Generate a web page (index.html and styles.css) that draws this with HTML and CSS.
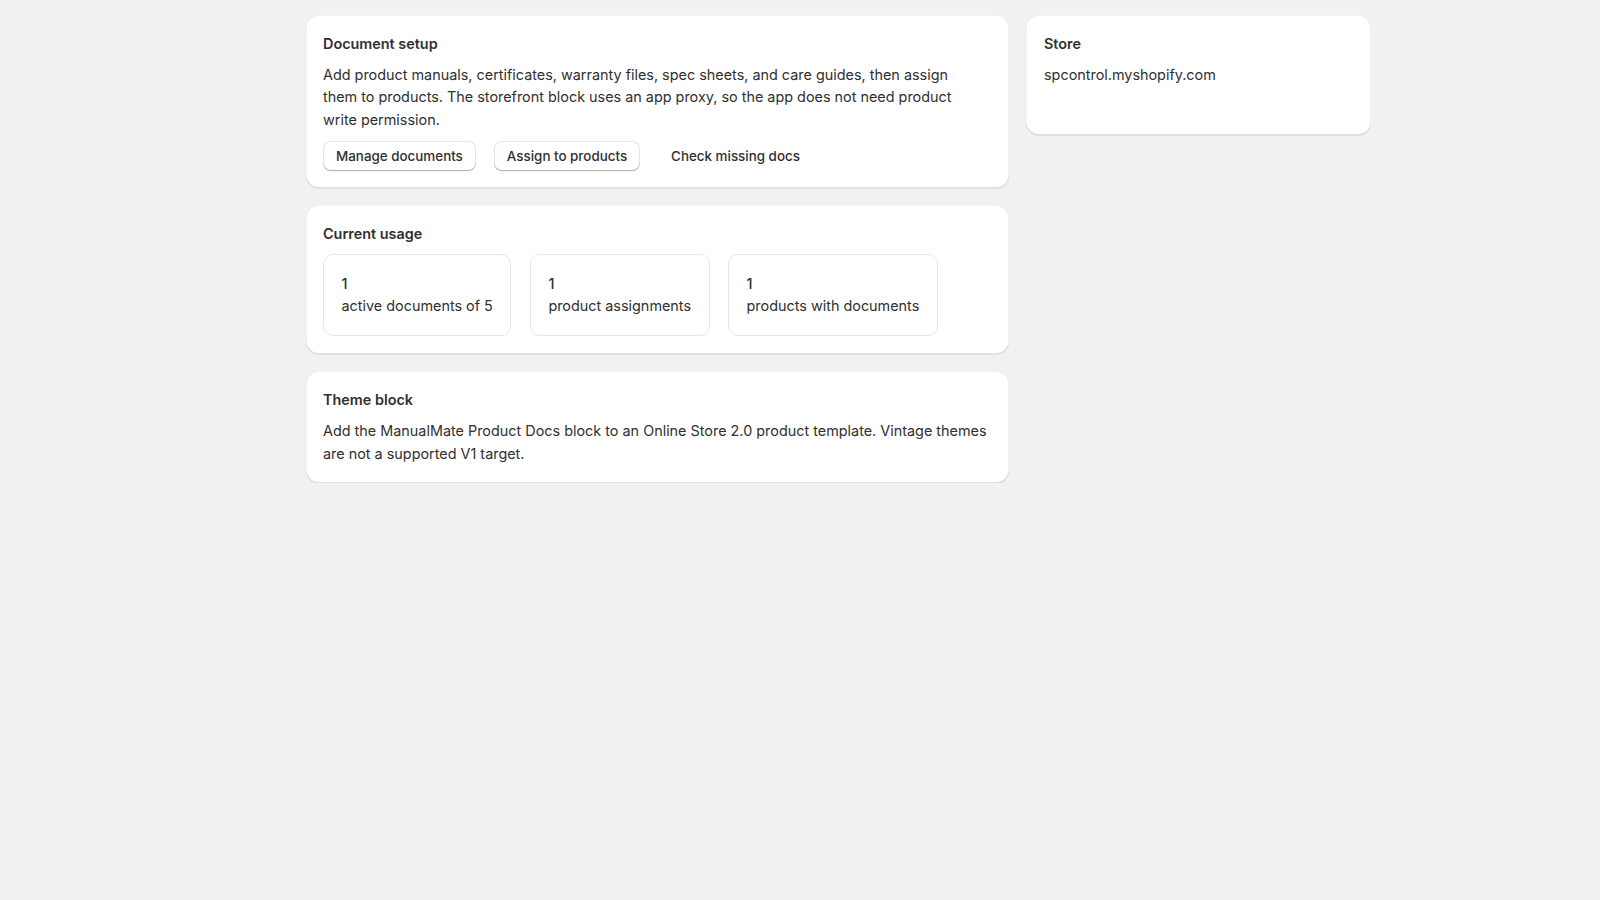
FILE: index.html
```html
<!DOCTYPE html>
<html lang="en">
<head>
<meta charset="utf-8">
<title>ManualMate</title>
<link rel="stylesheet" href="styles.css">
</head>
<body>
<div class="page">
  <div class="main">
    <section class="card">
      <h2 class="card-title">Document setup</h2>
      <p class="card-text">Add product manuals, certificates, warranty files, spec sheets, and care guides, then assign<br>them to products. The storefront block uses an app proxy, so the app does not need product<br>write permission.</p>
      <div class="actions">
        <button class="btn">Manage documents</button>
        <button class="btn">Assign to products</button>
        <button class="btn btn-plain">Check missing docs</button>
      </div>
    </section>

    <section class="card">
      <h2 class="card-title">Current usage</h2>
      <div class="stats">
        <div class="stat">
          <div class="stat-value">1</div>
          <div class="stat-label">active documents of 5</div>
        </div>
        <div class="stat">
          <div class="stat-value">1</div>
          <div class="stat-label">product assignments</div>
        </div>
        <div class="stat">
          <div class="stat-value">1</div>
          <div class="stat-label">products with documents</div>
        </div>
      </div>
    </section>

    <section class="card">
      <h2 class="card-title">Theme block</h2>
      <p class="card-text">Add the ManualMate Product Docs block to an Online Store 2.0 product template. Vintage themes are not a supported V1 target.</p>
    </section>
  </div>

  <aside class="side">
    <section class="card card-store">
      <h2 class="card-title">Store</h2>
      <p class="card-text">spcontrol.myshopify.com</p>
    </section>
  </aside>
</div>
</body>
</html>
```

FILE: styles.css
```css
* {
  box-sizing: border-box;
}

html,
body {
  margin: 0;
  background: #f1f1f1;
}

body {
  font-family: Inter, "Noto Sans", "Liberation Sans", sans-serif;
  font-size: 14.4px;
  color: #303030;
  -webkit-font-smoothing: antialiased;
}

.page {
  display: flex;
  align-items: flex-start;
  gap: 17px;
  padding: 15px 0 0 306px;
}

.main {
  width: 703px;
  display: flex;
  flex-direction: column;
  gap: 17px;
}

.side {
  width: 345px;
}

.card {
  background: #ffffff;
  border-radius: 13px;
  padding: 19px 17px 18px;
  display: flex;
  flex-direction: column;
  gap: 10px;
  box-shadow:
    0 1px 0 0 rgba(26, 26, 26, 0.07),
    inset 0 -1px 0 0 rgba(0, 0, 0, 0.12),
    inset 1px 0 0 0 rgba(0, 0, 0, 0.05),
    inset -1px 0 0 0 rgba(0, 0, 0, 0.05),
    inset 0 1px 0 0 rgba(0, 0, 0, 0.04);
}

.card-store {
  min-height: 120px;
  padding-left: 18px;
}

.card-title {
  margin: 0;
  font-size: 14.4px;
  line-height: 20px;
  font-weight: 600;
  color: #303030;
}

.card-text {
  margin: 0;
  font-size: 14.4px;
  line-height: 22.4px;
  font-weight: 400;
  color: #303030;
}

.actions {
  display: flex;
  gap: 18px;
  margin-bottom: -1px;
}

.btn {
  font-family: inherit;
  font-size: 13.4px;
  font-weight: 500;
  line-height: 20px;
  color: #303030;
  background: #ffffff;
  border: 0;
  border-radius: 8px;
  padding: 5px 13px;
  height: 30px;
  cursor: pointer;
  box-shadow:
    inset 0 -1px 0 0 #b5b5b5,
    inset 0 0 0 1px rgba(0, 0, 0, 0.1),
    0 1px 0 0 rgba(0, 0, 0, 0.04);
}

.btn-plain {
  background: transparent;
  box-shadow: none;
  padding: 5px 13px;
}

.stats {
  display: flex;
  gap: 18.5px;
}

.stat {
  border: 1px solid #e6e6e6;
  border-radius: 10px;
  padding: 17.5px 17.5px;
  line-height: 22.5px;
}

.stat-value {
  font-weight: 500;
}
```
